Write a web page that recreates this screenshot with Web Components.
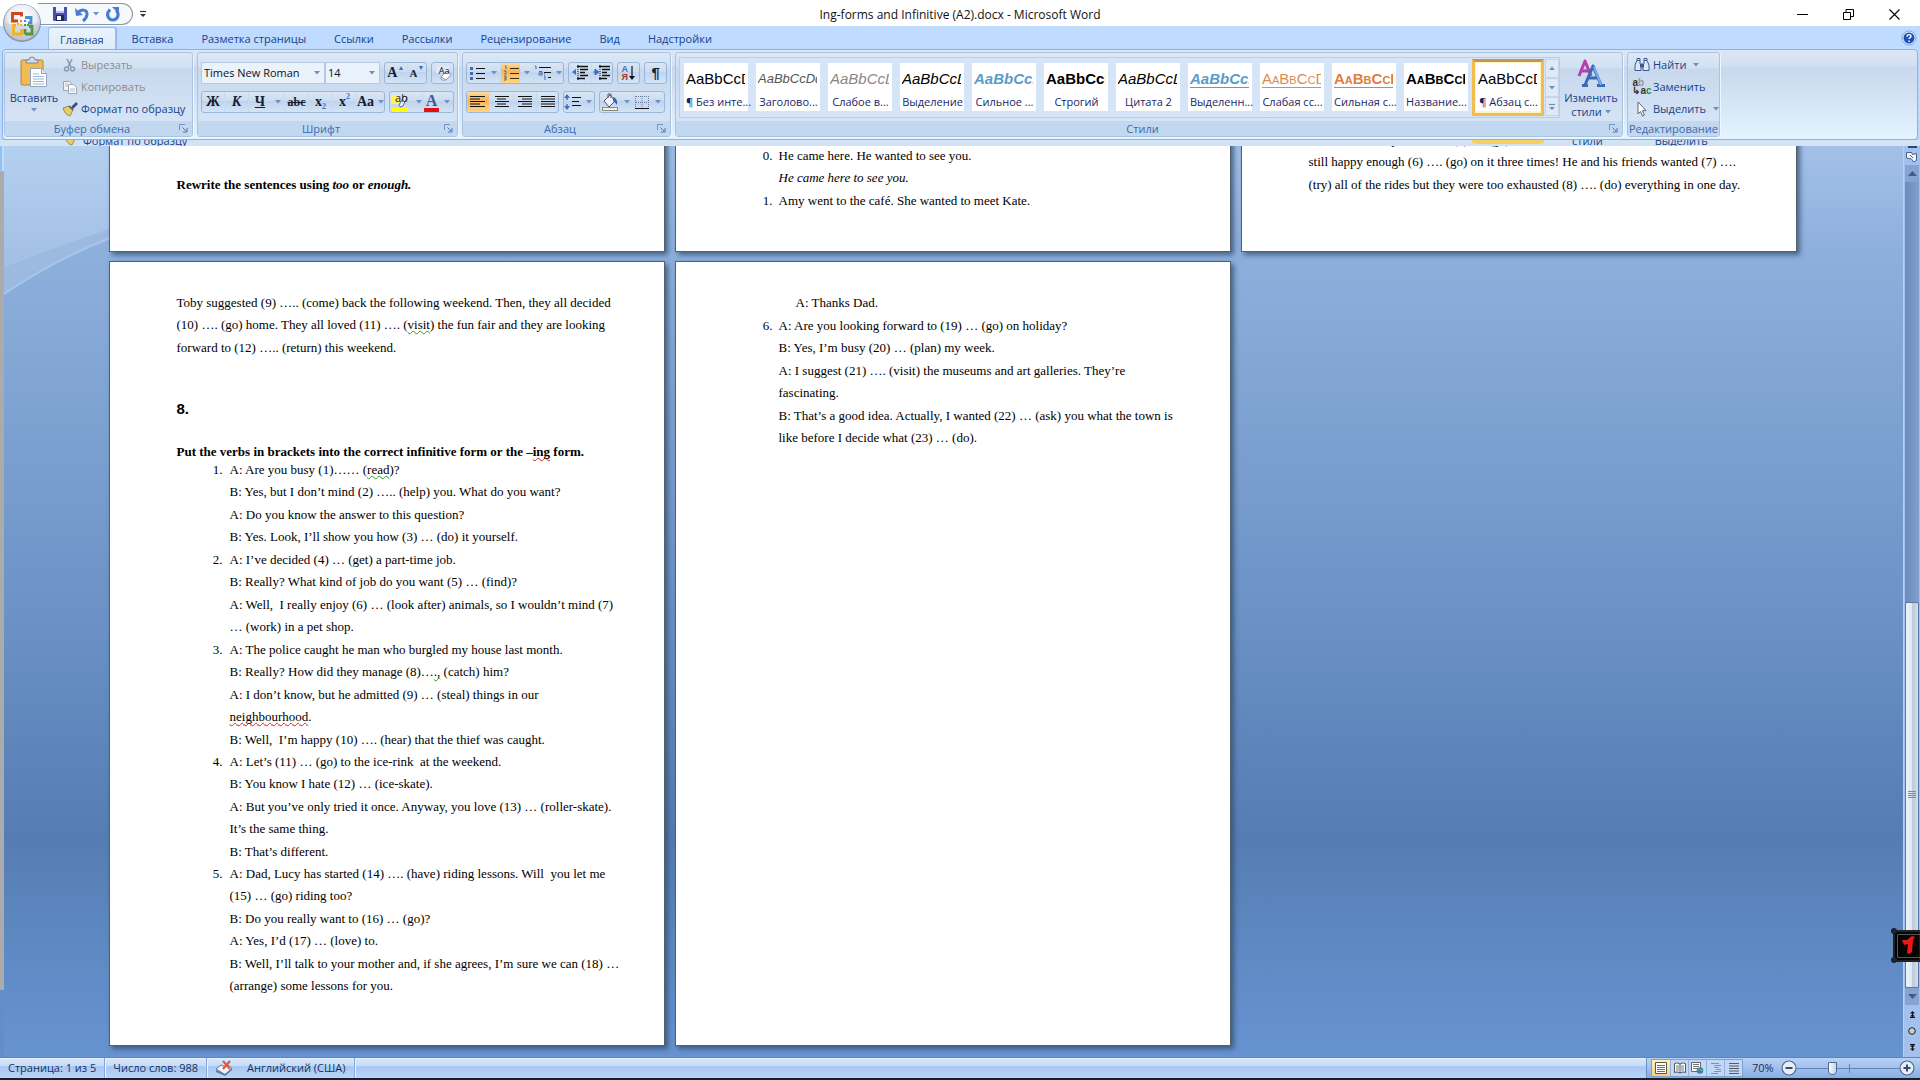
<!DOCTYPE html>
<html lang="ru">
<head>
<meta charset="utf-8">
<title>Ing-forms and Infinitive (A2).docx - Microsoft Word</title>
<style>
html,body{margin:0;height:100%;overflow:hidden;background:#fff}
body{font:11px/16px "Open Sans","Noto Sans",sans-serif;color:#15428b}
</style>
</head>
<body>
<word-app></word-app>
<script>
const define = (name, css, html, setup) => {
  customElements.define(name, class extends HTMLElement {
    constructor() {
      super();
      this.attachShadow({mode: 'open'});
    }
    connectedCallback() {
      if (this.shadowRoot.childNodes.length) return;
      const t = document.createElement('template');
      const body = typeof html === 'function' ? html(this) : html;
      t.innerHTML = `<style>*{box-sizing:border-box}button{font:inherit;color:inherit;border:0;padding:0;margin:0;background:none}${css}</style>${body}`;
      this.shadowRoot.append(t.content.cloneNode(true));
      if (setup) setup(this);
    }
  });
};

/* ---------- icons: [width, height, svg body] ---------- */
const bars = (y0, list, x = 0, c = '#111') => list.map(([a, b], i) => `<path stroke="${c}" d="M${x + a} ${y0 + i * 2.5}H${x + b}"/>`).join('');
const ICONS = {
  office: [42, 42, `<defs><radialGradient id="g" cx=".5" cy=".35" r=".65"><stop offset="0" stop-color="#fff"/><stop offset=".6" stop-color="#e9ecf1"/><stop offset="1" stop-color="#a9b3c2"/></radialGradient></defs>
    <circle cx="21" cy="21" r="19" fill="#8a94a6"/><circle cx="21" cy="20.500" r="18" fill="url(#g)"/><path d="M4 21a17 17 0 0 0 34 0q-17 4-34 0z" fill="#c4cad4" opacity=".6"/>
    <g fill="none" stroke-width="2.800"><path d="M17 19H11.500V11.500H20.500V14.500" stroke="#d0441c"/><path d="M24 15.500H30V21H27" stroke="#4a8fcf"/><path d="M15 23.500H12.500V32H20.500V27" stroke="#f0b323"/><path d="M24 32H31V24.500H28M24 27V32" stroke="#4f9a3c"/></g>
    <g fill="#e8762c"><rect x="19" y="18" width="2" height="2"/><rect x="23" y="18" width="2" height="2" fill="#4a8fcf"/><rect x="19" y="22" width="2" height="2" fill="#f0b323"/><rect x="23" y="22" width="2" height="2" fill="#4f9a3c"/><rect x="16" y="21" width="2" height="2" fill="#f0b323"/><rect x="26" y="22" width="2" height="2" fill="#4f9a3c"/></g>`],
  save: [16, 16, `<path d="M1 1h14v14H2l-1-1z" fill="#4a4fa8"/><path d="M4 1h8v6H4z" fill="#f4f6ff"/><path d="M4 9h8v6H4z" fill="#1f2566"/><path d="M5 10h4v4H5z" fill="#fff"/><path d="M4 5h8v2H4z" fill="#b9c4ee"/>`],
  undo: [16, 16, `<path d="M4 7C7 3 13 3 13 8q0 4-4 7" fill="none" stroke="#4a7bd0" stroke-width="3"/><path d="M1 2l1 8 7-1z" fill="#4a7bd0"/>`],
  redo: [16, 16, `<path d="M5 3.500C0 9 4 14 8 14s7-5 3.500-9.500" fill="none" stroke="#4a7bd0" stroke-width="3.200"/><path d="M7 1h7v7z" fill="#4a7bd0"/>`],
  more: [8, 8, `<path d="M1 1.500h6" stroke="#333" stroke-width="1.200"/><path d="M1 4h6L4 7z" fill="#333"/>`],
  gal: [8, 8, `<path d="M1 1.500h6" stroke="#6d8fc3" stroke-width="1.200"/><path d="M1 4h6L4 7z" fill="#6d8fc3"/>`],
  arrow: [6, 4, `<path d="M0 0h6L3 3.500z" fill="#6d8fc3"/>`],
  min: [11, 11, `<path d="M0 5.500h11" stroke="#000"/>`],
  max: [11, 11, `<path d="M.5 3.500h7v7h-7zM3 3.500V.5h7.500v7H8" fill="none" stroke="#000"/>`],
  close: [11, 11, `<path d="M.5.500l10 10M10.500.500l-10 10" stroke="#000" stroke-width="1.100"/>`],
  help: [16, 16, `<circle cx="8" cy="8" r="7" fill="#dcecff" stroke="#7fa4dc"/><circle cx="8" cy="8" r="5.500" fill="#1e51b8"/><path d="M6 6.800q0-2.200 2-2.200t2 1.600q0 1-1.300 1.700-.6.400-.6 1.100M8.100 10.500v1.400" fill="none" stroke="#fff" stroke-width="1.400"/>`],
  paste: [28, 32, `<rect x="1" y="4" width="22" height="25" rx="1" fill="#eebb57" stroke="#b98530"/><path d="M6 7V4h3q0-3 3-3t3 3h3v3z" fill="#d7dbe2" stroke="#7d8796"/><path d="M10.500 12.500h11l5 5v13h-16z" fill="#fff" stroke="#8fa3c4"/><path d="M21.500 12.500v5h5" fill="#dce7f7" stroke="#8fa3c4"/><path d="M13 18h6M13 20.500h11M13 23h11M13 25.500h11M13 28h11" stroke="#9db4d8"/>`],
  cut: [16, 16, `<path d="M5 2l4 8M10 2L6 10" stroke="#8b9bb3" stroke-width="1.600"/><circle cx="4.500" cy="12" r="2" fill="none" stroke="#8b9bb3" stroke-width="1.500"/><circle cx="10.500" cy="12" r="2" fill="none" stroke="#8b9bb3" stroke-width="1.500"/>`],
  copy: [16, 16, `<path d="M1.500 2.500h6l2 2v7h-8z" fill="#f1f3f7" stroke="#9aa5b6"/><path d="M6.500 5.500h5l3 3v6h-8z" fill="#fff" stroke="#9aa5b6"/><path d="M3 5h3M3 7h3M8 10h5M8 12h5" stroke="#b4bdcb"/>`],
  brush: [16, 16, `<path d="M9 6l5-5 2 2-5 5z" fill="#3b4c8a"/><path d="M1 7l6-2 4 4-3 6q-5-1-7-8z" fill="#e9cc68" stroke="#8e7a3a" stroke-width=".8"/><path d="M7 5l4 4" stroke="#555" stroke-width="1.500"/>`],
  launcher: [9, 9, `<path d="M.5 6V.5H6" fill="none" stroke="#6f95c7"/><path d="M3.500 3.500L7 7M8 4v4H4" fill="none" stroke="#4c75b0"/>`],
  clear: [18, 18, `<path d="M2 2h13v7H2z" fill="#e9eef8" opacity=".6"/><path d="M7 13l5-5q2-1 4 1 1 2 0 3l-4 4q-3 1-5-1z" fill="#fff" stroke="#8a97b4"/><path d="M7 13l5 3" stroke="#8a97b4"/>`],
  pen: [22, 20, `<rect x="2" y="16" width="16" height="4" fill="#ff0"/><rect x="1" y="3" width="9" height="9" fill="#fff35a"/><path d="M9 13l5-9 3 1-4 9-3 1z" fill="#e4ecf8" stroke="#5b6f96"/>`],
  bullets: [16, 16, `<g fill="#4468b0"><rect x="1" y="2" width="3" height="3"/><rect x="1" y="7" width="3" height="3"/><rect x="1" y="12" width="3" height="3"/></g><path d="M7 3.500h9M7 8.500h9M7 13.500h9" stroke="#111"/>`],
  numbers: [16, 16, `<path d="M2 1h1v3M1 6h2v1.500L1.500 9h2M1 11h2v4H1M1 13h2" fill="none" stroke="#56688c"/><path d="M7 3.500h9M7 8.500h9M7 13.500h9" stroke="#3a2b10"/>`],
  multi: [18, 16, `<path d="M1 1h1v3M5 6.500h3V10H5V8h3M10 11h1v4M10 9h1" fill="none" stroke="#4468b0"/><path d="M5 2.500h12M10 7.500h7M14 12.500h3" stroke="#111"/>`],
  outdent: [18, 16, `<path d="M6 1.500h11M9 4.500h8M9 7.500h5M9 10.500h8M6 13.500h8" stroke="#111" stroke-width="1.500"/><path d="M7 0v16" stroke="#111" stroke-dasharray="1 1"/><path d="M5 4v6L1 7z" fill="#3f6fc4"/>`],
  indent: [18, 16, `<path d="M6 1.500h11M9 4.500h8M9 7.500h5M9 10.500h8M6 13.500h8" stroke="#111" stroke-width="1.500"/><path d="M7 0v16" stroke="#111" stroke-dasharray="1 1"/><path d="M2 4v6l4-3zM0 7h3" fill="#3f6fc4" stroke="#3f6fc4"/>`],
  sort: [8, 16, `<path d="M4 1v12" stroke="#111" stroke-width="1.200"/><path d="M1 11h6l-3 4z" fill="#111"/>`],
  left: [16, 14, bars(1.5, [[0, 15], [0, 10], [0, 15], [0, 10], [0, 15]])],
  center: [16, 14, bars(1.5, [[1, 15], [3, 12], [1, 15], [3, 12], [1, 15]])],
  right: [16, 14, bars(1.5, [[1, 15], [5, 15], [1, 15], [5, 15], [1, 15]])],
  justify: [16, 14, bars(1.5, [[1, 15], [1, 15], [1, 15], [1, 15], [1, 15]])],
  spacing: [18, 16, `<path d="M3 1v5M3 10v5" stroke="#3f6fc4" stroke-width="1.500"/><path d="M0 4l3-4 3 4zM0 12l3 4 3-4z" fill="#3f6fc4"/><path d="M8 3.500h9M8 7.500h7M8 11.500h9" stroke="#111"/>`],
  bucket: [18, 18, `<path d="M3 8l6-6 5 6-6 6z" fill="#eef3fb" stroke="#556"/><path d="M7 5V1h3v4" fill="none" stroke="#556"/><path d="M12 4q5 1 4 8-2-3-4-4z" fill="#3a65ad"/><rect x="1.500" y="14.500" width="15" height="3" fill="#f7f3e4" stroke="#8a8a80"/>`],
  borders: [15, 15, `<path d="M.5 1v12M13.500 1v12M7 1v12M1 1.500h12M1 7.500h12" stroke="#6a7da5" stroke-dasharray="1 1"/><path d="M0 13.500h14" stroke="#111"/>`],
  bigA: [32, 32, `<g fill="none" stroke-linejoin="round"><path d="M4 18L10 3l6 15M6 13h8" stroke="#b43fae" stroke-width="3"/><path d="M10 27L18 8l8 19M13 20h10M7 27.500h6M22 27.500h8" stroke="#3a6ab4" stroke-width="3"/><path d="M19 9l7 18" stroke="#7eaaf0" stroke-width="2"/></g>`],
  find: [16, 14, `<g fill="#dce8fa" stroke="#38588f"><path d="M3 2.500h3v3l1 2v5H1V7zM10 2.500h3L15 7v5.500H9v-5l1-2z"/><path d="M6.500 6h3v3h-3z" fill="#38588f"/><path d="M3 .5h3v2H3zM10 .5h3v2h-3z"/></g>`],
  select: [12, 16, `<path d="M2 1l8 8.500-3.600.3L8.500 14l-2 1-2-4.500L2 13z" fill="#fff" stroke="#5a6578"/>`],
  proof: [18, 16, `<path d="M1 9l5-4 3 1.500 5-1 3 3-7 6z" fill="#eef3fc" stroke="#6378a6"/><path d="M1 10v2l9 4 7-6V8l-7 6z" fill="#6378a6"/><path d="M8 1l7 8M15 1L8 9" stroke="#e2553d" stroke-width="2"/>`],
  vprint: [12, 12, `<path d="M.5.5h11v11H.5z" fill="#fff" stroke="#5b5640"/><path d="M2 3.500h8M2 5.500h8M2 7.500h8M2 9.500h8" stroke="#776f50"/>`],
  vread: [12, 12, `<path d="M6 2Q3 0 .5 1.500v9Q3 9 6 11q3-2 5.500-.5v-9Q9 0 6 2zV11" fill="#fff" stroke="#4d5360"/><path d="M2 4h3M2 6h3M2 8h3M7 4h3M7 6h3M7 8h3" stroke="#777"/>`],
  vweb: [13, 12, `<path d="M.5.5h9v9h-9z" fill="#fff" stroke="#666"/><path d="M2 2.500h6M2 4.500h6M2 6.500h5" stroke="#777"/><circle cx="9" cy="8.500" r="3.300" fill="#3d7fa8"/><path d="M7 8q2-2 3 0t2 0" stroke="#6fc06a" fill="none"/>`],
  vout: [12, 12, `<path d="M1 1.500h8M4 3.500h7M4 5.500h5M6 7.500h5M4 9.500h7M1 11.500h7" stroke="#8a919e"/>`],
  vdraft: [12, 12, `<path d="M1 1.500h10M1 4h10M1 6.500h10M1 9h10M1 11.500h10" stroke="#555b66"/>`],
  minus: [16, 16, `<circle cx="8" cy="8" r="7" fill="#e4eefb" stroke="#54698f" stroke-width="1.200"/><path d="M4.500 8h7" stroke="#3c4a66" stroke-width="2"/>`],
  plus: [16, 16, `<circle cx="8" cy="8" r="7" fill="#e4eefb" stroke="#54698f" stroke-width="1.200"/><path d="M4.500 8h7M8 4.500v7" stroke="#3c4a66" stroke-width="2"/>`],
  ruler: [12, 12, `<path d="M.5 1.500h5l1 2 4-1v7l-3 1.500-2-3-5-1z" fill="#f2f6fc" stroke="#4e5f80"/><path d="M4 4l3 3" stroke="#4e5f80"/>`],
  up: [9, 5, `<path d="M0 5h9L4.500 0z" fill="#435a8c"/>`],
  down: [9, 5, `<path d="M0 0h9L4.500 5z" fill="#435a8c"/>`],
  prev: [7, 7, `<path d="M3.500 0L6 2.500H1zM3.500 3L6 5.500H1z" fill="#111"/><path d="M1 6.500h5M3.500 1v5" stroke="#111"/>`],
  next: [7, 7, `<path d="M3.500 7L6 4.500H1zM3.500 4L6 1.500H1z" fill="#111"/><path d="M1 .5h5M3.500 1v5" stroke="#111"/>`],
  dot: [8, 8, `<circle cx="4" cy="4" r="3.300" fill="#c9ccd1" stroke="#222"/>`],
  badge: [30, 37, `<path d="M4 4h26v30H4z" fill="#050505" stroke="#222" stroke-width="2"/><path d="M7.500 7.500H30M7.500 7.500v23H30" fill="none" stroke="#555"/><circle cx="4" cy="4" r="3" fill="#1c222b"/><circle cx="4" cy="33" r="3" fill="#1c222b"/><path d="M12 13l5 0 5-4 3 1-2 3-1 12-3 2-2-1 1-9-4 1z" fill="#f01616"/>`]
};
define('office-icon', ':host{display:inline-flex;flex:none}svg{display:block}', el => {
  const [w, h, body] = ICONS[el.getAttribute('name')];
  return `<svg width="${w}" height="${h}" viewBox="0 0 ${w} ${h}" aria-hidden="true">${body}</svg>`;
});

/* ---------- title bar ---------- */
define('quick-access', `
:host{display:flex;align-items:center;gap:6px}
.pill{display:flex;align-items:center;gap:3px;height:22px;padding:0 11px 0 14px;border:1px solid #8f959f;border-left:0;border-radius:0 11px 11px 0;background:#f5f8fd}
.pill button:nth-child(2n){margin-left:3px}
button{display:flex}`, `
<div class="pill"><button aria-label="Сохранить"><office-icon name="save"></office-icon></button>
<button aria-label="Отменить"><office-icon name="undo"></office-icon></button><button aria-label="Список отмены"><office-icon name="arrow"></office-icon></button>
<button aria-label="Повторить"><office-icon name="redo"></office-icon></button></div>
<button aria-label="Настройка панели"><office-icon name="more"></office-icon></button>`);

define('title-bar', `
:host{display:grid;grid-template-columns:1fr auto 1fr;height:26px;background:#fff;color:#111;align-items:center}
quick-access{padding-left:38px}
h1{margin:0;font:inherit;font-size:12px;line-height:26px;padding-top:2px}
.win{display:flex;justify-content:flex-end;gap:35px;padding-right:20px}
.win button{display:flex}
.orb{position:absolute;left:1px;top:2px;z-index:2;display:flex}`, `
<button class="orb" aria-label="Office"><office-icon name="office"></office-icon></button>
<quick-access></quick-access><h1><slot></slot></h1>
<div class="win"><button aria-label="Свернуть"><office-icon name="min"></office-icon></button><button aria-label="Развернуть"><office-icon name="max"></office-icon></button><button aria-label="Закрыть"><office-icon name="close"></office-icon></button></div>`);

define('ribbon-tabs', `
:host{display:flex;height:23px;background:#bfdbff;padding:0 3px 0 48px;align-items:stretch}
nav{display:flex;flex:1;gap:4px}
nav button{padding:0 12px;line-height:26px;color:#15428b}
nav button[aria-current]{padding:0 11px;background:linear-gradient(#eaf4ff,#dfeaf8);border:1px solid #9dbce4;border-bottom:0;border-radius:3px 3px 0 0;line-height:24px;margin-top:1px;box-shadow:1px 0 1px #8fb6ea}
.help{display:flex;align-items:center}`, `
<nav><button aria-current="page">Главная</button><button>Вставка</button><button>Разметка страницы</button><button>Ссылки</button><button>Рассылки</button><button>Рецензирование</button><button>Вид</button><button>Надстройки</button></nav>
<button class="help" aria-label="Справка"><office-icon name="help"></office-icon></button>`);

/* ---------- ribbon parts ---------- */
define('ribbon-group', `
:host{display:flex;flex-direction:column;height:85px;border:1px solid #a9c4e2;border-radius:3px;box-shadow:1px 1px 0 #eef6ff;background:linear-gradient(#dde8f5,#d2e0f1 18%,#c7d8ed 19%,#d9e8f8)}
.body{flex:1;display:flex}
footer{display:flex;align-items:center;height:15px;background:#c1d8f0;color:#3e6aaa;line-height:15px}
footer span{flex:1;text-align:center;white-space:nowrap}
footer button{display:flex;padding-right:4px}`, el => `
<div class="body"><slot></slot></div><footer><span>${el.getAttribute('label')}</span>${el.hasAttribute('plain') ? '' : '<button aria-label="Параметры"><office-icon name="launcher"></office-icon></button>'}</footer>`);

define('button-strip', `
:host{display:flex;height:22px;border:1px solid #9ab6d9;border-radius:3px;background:linear-gradient(#d9e6f5,#cbdcf0 45%,#bfd3ec 46%,#d3e4f7);overflow:hidden}`, '<slot></slot>');

define('tool-button', `
:host{display:flex;border-left:1px solid #c9daee}
:host(:first-child){border-left:0}
button{display:flex;align-items:center;justify-content:center;gap:4px;flex:1;color:#16202e}
:host([active]) button .face{background:linear-gradient(#fbdca0,#f9b45a 40%,#fdd67c)}
.face{display:flex;align-items:center;justify-content:center;align-self:stretch;flex:1;font:bold 14px/18px "Liberation Serif",serif}
office-icon[name=arrow]{padding-right:3px}`, el => `
<button aria-label="${el.getAttribute('label')}"><span class="face">${el.hasAttribute('icon') ? `<office-icon name="${el.getAttribute('icon')}"></office-icon>` : ''}<slot></slot></span>${el.hasAttribute('menu') ? '<office-icon name="arrow"></office-icon>' : ''}</button>`,
el => { el.style.width = el.getAttribute('w') + 'px'; });

define('command-row', `
:host{display:block;color:#15428b}:host([disabled]){color:#8d8d8d}
button{display:flex;align-items:center;gap:3px;height:22px;white-space:nowrap}
.ic{width:16px;display:flex;justify-content:center;font:bold 10px/8px "Liberation Sans",sans-serif;color:#333}
office-icon[name=arrow]{margin-left:4px}
.rep{display:block;text-align:left}.rep b{color:#2d8a2d}.rep i{font-style:normal;color:#999}`, el => `
<button ${el.hasAttribute('disabled') ? 'disabled style="color:inherit"' : ''}><span class="ic">${el.getAttribute('icon') === 'replace' ? '<span class="rep">a<i>b</i><br>↳a<b>c</b></span>' : `<office-icon name="${el.getAttribute('icon')}"></office-icon>`}</span><span><slot></slot></span>${el.hasAttribute('menu') ? '<office-icon name="arrow"></office-icon>' : ''}</button>`);

define('clipboard-tools', `
:host{display:flex;width:187px;padding:1px 0 0 5px;gap:4px}
.paste{display:flex;flex-direction:column;align-items:center;width:48px;padding-top:2px;gap:2px}`, `
<button class="paste"><office-icon name="paste"></office-icon><span>Вставить</span><office-icon name="arrow"></office-icon></button>
<div><command-row disabled icon="cut">Вырезать</command-row><command-row disabled icon="copy">Копировать</command-row><command-row icon="brush">Формат по образцу</command-row></div>`);

define('combo-box', `
:host{display:flex;height:22px;border:1px solid #b3c9e6;background:#eaf2fb;align-items:center}
select{appearance:none;border:0;background:none;flex:1;min-width:0;font:inherit;color:#111;padding:0 0 0 2px;height:20px}
office-icon{padding-right:4px}`, el => `<select aria-label="${el.getAttribute('label')}"><option>${el.getAttribute('value')}</option></select><office-icon name="arrow"></office-icon>`,
el => { el.style.width = el.getAttribute('w') + 'px'; });

define('font-tools', `
:host{display:flex;flex-direction:column;gap:7px;padding:9px 3px 0;width:259px}
.row{display:flex;gap:4px}
.combos{display:flex}
.u{text-decoration:underline}.s{text-decoration:line-through;font-size:12px}
.small{font-size:11px}.tri{font-size:7px;color:#3f6fc4;align-self:flex-start;line-height:10px}
.dig{font-size:8px;color:#3f6fc4}.dig.lo{align-self:flex-end;line-height:10px}.dig.hi{align-self:flex-start;line-height:10px}
.stack{display:grid}.stack>*{grid-area:1/1}
.hl{font:11px/12px "Open Sans",sans-serif;padding-left:1px}
.aa{font:9px/10px "Open Sans",sans-serif;padding:2px 0 0 3px}
.col{color:#3a5a9c;border-bottom:4px solid #e3100f;line-height:15px;padding:0 2px;font-size:16px}`, `
<div class="row"><div class="combos"><combo-box w="124" label="Шрифт" value="Times New Roman"></combo-box><combo-box w="55" label="Размер шрифта" value="14"></combo-box></div>
<button-strip><tool-button w="22" label="Увеличить размер"><span>A</span><span class="tri">▲</span></tool-button><tool-button w="20" label="Уменьшить размер"><span class="small">A</span><span class="tri">▼</span></tool-button></button-strip>
<button-strip><tool-button w="21" label="Очистить формат"><span class="stack"><office-icon name="clear"></office-icon><span class="aa">Aa</span></span></tool-button></button-strip></div>
<div class="row"><button-strip><tool-button w="22" label="Полужирный">Ж</tool-button><tool-button w="24" label="Курсив"><i>К</i></tool-button><tool-button w="36" menu label="Подчеркнутый"><span class="u">Ч</span></tool-button><tool-button w="24" label="Зачеркнутый"><span class="s">abc</span></tool-button><tool-button w="24" label="Подстрочный"><span>x</span><span class="dig lo">2</span></tool-button><tool-button w="24" label="Надстрочный"><span>x</span><span class="dig hi">2</span></tool-button><tool-button w="28" menu label="Регистр">Aa</tool-button></button-strip>
<button-strip><tool-button w="32" menu label="Выделение цветом"><span class="stack"><office-icon name="pen"></office-icon><span class="hl">ab</span></span></tool-button><tool-button w="31" menu label="Цвет текста"><span class="col">A</span></tool-button></button-strip></div>`);

define('paragraph-tools', `
:host{display:flex;flex-direction:column;gap:7px;padding:9px 3px 0;width:207px}
.row{display:flex;gap:4px}
.az{display:grid;font:bold 9px/8px "Liberation Sans",sans-serif;color:#3f6fc4}.az b{color:#a8322c}
.p{font:bold 15px/18px "Liberation Sans",sans-serif}`, `
<div class="row"><button-strip><tool-button w="33" menu icon="bullets" label="Маркеры"></tool-button><tool-button w="34" menu active icon="numbers" label="Нумерация"></tool-button><tool-button w="30" menu icon="multi" label="Многоуровневый список"></tool-button></button-strip>
<button-strip><tool-button w="22" icon="outdent" label="Уменьшить отступ"></tool-button><tool-button w="21" icon="indent" label="Увеличить отступ"></tool-button></button-strip>
<button-strip><tool-button w="21" label="Сортировка"><span class="az"><span>А</span><b>Я</b></span><office-icon name="sort"></office-icon></tool-button></button-strip>
<button-strip><tool-button w="21" label="Отобразить все знаки"><span class="p">¶</span></tool-button></button-strip></div>
<div class="row"><button-strip><tool-button w="22" active icon="left" label="По левому краю"></tool-button><tool-button w="24" icon="center" label="По центру"></tool-button><tool-button w="23" icon="right" label="По правому краю"></tool-button><tool-button w="22" icon="justify" label="По ширине"></tool-button></button-strip>
<button-strip><tool-button w="30" menu icon="spacing" label="Интервал"></tool-button></button-strip>
<button-strip><tool-button w="33" menu icon="bucket" label="Заливка"></tool-button><tool-button w="31" menu icon="borders" label="Границы"></tool-button></button-strip></div>`);

define('style-tile', `
:host{display:flex;width:72px;padding:4px;color:#1a1f66}
:host([selected]){padding:1px;border:3px solid #f0bd4e;border-top-color:#c8964e;background:#fff3c8}
button{display:flex;flex-direction:column;width:64px;height:48px;background:#fff;padding:4px 1px 0 2px}
.sample{height:24px;width:59px;overflow:hidden;white-space:nowrap;font:15px/24px "Liberation Sans",sans-serif;color:var(--c,#000);text-align:left}
.name{align-self:stretch;text-align:center;white-space:nowrap;line-height:22px;height:20px}
.i{font-style:italic}.b{font-weight:bold}.u{height:21px;margin-bottom:3px;border-bottom:1px solid}.sc{font-variant:small-caps}.sm{font-size:13px}`, el => `
<button><span class="sample ${el.getAttribute('look') || ''}" style="--c:${el.getAttribute('color') || '#000'}">AaBbCcDd</span><span class="name"><slot></slot></span></button>`);

define('style-gallery', `
:host{display:flex;padding:4px 4px 0 3px;gap:4px}
.frame{display:flex;height:61px;border:1px solid #b8cde8;background:#d5e5f7;padding:1px 0}
.scroll{display:flex;flex-direction:column;width:14px;margin-left:1px}
.scroll button{flex:1;display:flex;align-items:center;justify-content:center;border:1px solid #c3d5ec;background:#e0eaf6}
.scroll .up{transform:scaleY(-1)}
.change{display:flex;flex-direction:column;align-items:center;width:54px;line-height:13px;padding-top:1px;gap:1px}
.change span{display:flex;align-items:center;gap:3px}`, `
<div class="frame"><style-tile>¶ Без инте...</style-tile><style-tile look="i sm" color="#555">Заголово...</style-tile><style-tile look="i" color="#888">Слабое в...</style-tile><style-tile look="i">Выделение</style-tile><style-tile look="i b" color="#5b9bc8">Сильное ...</style-tile><style-tile look="b">Строгий</style-tile><style-tile look="i">Цитата 2</style-tile><style-tile look="i b u" color="#5b9bc8">Выделенн...</style-tile><style-tile look="sc u" color="#d98c52">Слабая сс...</style-tile><style-tile look="sc b u" color="#dc8040">Сильная с...</style-tile><style-tile look="sc b">Название...</style-tile><style-tile selected>¶ Абзац с...</style-tile>
<div class="scroll"><button class="up" aria-label="Вверх"><office-icon name="arrow"></office-icon></button><button aria-label="Вниз"><office-icon name="arrow"></office-icon></button><button aria-label="Все стили"><office-icon name="gal"></office-icon></button></div></div>
<button class="change"><office-icon name="bigA"></office-icon><span>Изменить</span><span>стили <office-icon name="arrow"></office-icon></span></button>`);

define('ribbon-panel', `
:host{display:flex;gap:4px;height:91px;margin:0 2px;padding:2px 1px;border:1px solid #8db2e3;border-radius:4px;background:linear-gradient(#dce7f5,#d2e0f1 18%,#c8d8ed 19%,#e3f3ff);box-shadow:0 1px 1px #8bb0d8}
.edit{padding:1px 0 0 6px;width:91px}`, `
<ribbon-group label="Буфер обмена"><clipboard-tools></clipboard-tools></ribbon-group>
<ribbon-group label="Шрифт"><font-tools></font-tools></ribbon-group>
<ribbon-group label="Абзац"><paragraph-tools></paragraph-tools></ribbon-group>
<ribbon-group label="Стили"><style-gallery></style-gallery></ribbon-group>
<ribbon-group label="Редактирование" plain><div class="edit"><command-row icon="find" menu>Найти</command-row><command-row icon="replace">Заменить</command-row><command-row icon="select" menu>Выделить</command-row></div></ribbon-group>`);

/* thin band under the ribbon where the lower edge of the commands repeats */
define('ribbon-echo', `
:host{display:flex;justify-content:flex-start;height:6px;overflow:hidden;background:#d3e3f6;padding-left:64px;color:#15428b}
div{display:flex;align-items:flex-end;height:6px}
.s{flex:none;width:1408px}
.y{flex:none;width:72px;height:4px;background:#f5cf6a;border-radius:0 0 3px 3px;align-self:flex-start}
.t{padding-left:28px}.v{padding-left:52px}
span{line-height:10px}
office-icon+span{padding-left:3px}`, `
<div class="s" aria-hidden="true"><office-icon name="brush"></office-icon><span>Формат по образцу</span></div><div class="y"></div><div class="t" aria-hidden="true"><span>стили</span></div><div class="v" aria-hidden="true"><span>Выделить</span></div>`);

/* ---------- document ---------- */
define('spell-mark', `:host{text-decoration:underline wavy #d02020 1px;text-underline-offset:1px;text-decoration-skip-ink:none}:host([grammar]){text-decoration-color:#2b9a2b}`, '<slot></slot>');

define('doc-page', `
:host{display:block;width:556px;height:785px;box-sizing:border-box;background:#fff;border:1px solid #51606f;box-shadow:3px 3px 5px #33506fcc;padding:30px 0 0 67px}
:host([tail]){display:flex;flex-direction:column;justify-content:flex-end;padding:0 0 var(--foot,55px) 67px}`, '<slot></slot>');

define('word-document', `
:host{display:grid;grid-template-columns:repeat(3,556px);gap:9px 10px;justify-content:center;align-content:end;padding:0 2px 11px 0;overflow:hidden;color:#000;font:13px/22px "Liberation Serif",serif}
p,h2,ol{margin:0;padding:0;white-space:nowrap}
p:nth-child(even){padding-bottom:1px}
h2{font:bold 15px/16px "Liberation Sans",sans-serif;padding:42px 0 27px}
h3{font:bold 13px/15px "Liberation Serif",serif;margin:0}
ol{list-style:none}
li{display:flex}
li>span{width:53px;padding-right:7px;text-align:right}
.in li>span{width:36px;padding-right:6px}
.cut span{display:inline-block}
.first{padding-bottom:1px}`, `
<doc-page tail style="--foot:59px"><h3>Rewrite the sentences using <i>too</i> or <i>enough.</i></h3></doc-page>
<doc-page tail style="--foot:39px"><ol class="in"><li><span>0.</span><div><p>He came here. He wanted to see you.</p><p><i>He came here to see you.</i></p></div></li><li><span>1.</span><div><p>Amy went to the café. She wanted to meet Kate.</p></div></li></ol></doc-page>
<doc-page tail><p class="cut"><span style="padding-left:83px">y</span><span style="padding-left:55px">(5)</span><span style="padding-left:20px">(go)</span></p><p>still happy enough (6) …. (go) on it three times! He and his friends wanted (7) ….</p><p>(try) all of the rides but they were too exhausted (8) …. (do) everything in one day.</p></doc-page>
<doc-page><p>Toby suggested (9) ….. (come) back the following weekend. Then, they all decided</p><p>(10) …. (go) home. They all loved (11) …. (<spell-mark grammar>visit</spell-mark>) the fun fair and they are looking</p><p>forward to (12) ….. (return) this weekend.</p>
<h2>8.</h2><h3>Put the verbs in brackets into the correct infinitive form or the –<spell-mark>ing</spell-mark> form.</h3>
<ol><li><span>1.</span><div><p>A: Are you busy (1)…… (<spell-mark grammar>read</spell-mark>)?</p><p>B: Yes, but I don’t mind (2) ….. (help) you. What do you want?</p><p>A: Do you know the answer to this question?</p><p>B: Yes. Look, I’ll show you how (3) … (do) it yourself.</p></div></li>
<li><span>2.</span><div><p>A: I’ve decided (4) … (get) a part-time job.</p><p>B: Really? What kind of job do you want (5) … (find)?</p><p>A: Well,&nbsp; I really enjoy (6) … (look after) animals, so I wouldn’t mind (7)</p><p>… (work) in a pet shop.</p></div></li>
<li><span>3.</span><div><p>A: The police caught he man who burgled my house last month.</p><p>B: Really? How did they manage (8)…<spell-mark grammar>.,</spell-mark> (catch) him?</p><p>A: I don’t know, but he admitted (9) … (steal) things in our</p><p><spell-mark>neighbourhood</spell-mark>.</p><p>B: Well,&nbsp; I’m happy (10) …. (hear) that the thief was caught.</p></div></li>
<li><span>4.</span><div><p>A: Let’s (11) … (go) to the ice-rink&nbsp; at the weekend.</p><p>B: You know I hate (12) … (ice-skate).</p><p>A: But you’ve only tried it once. Anyway, you love (13) … (roller-skate).</p><p>It’s the same thing.</p><p>B: That’s different.</p></div></li>
<li><span>5.</span><div><p>A: Dad, Lucy has started (14) …. (have) riding lessons. Will&nbsp; you let me</p><p>(15) … (go) riding too?</p><p>B: Do you really want to (16) … (go)?</p><p>A: Yes, I’d (17) … (love) to.</p><p>B: Well, I’ll talk to your mother and, if she agrees, I’m sure we can (18) …</p><p>(arrange) some lessons for you.</p></div></li></ol></doc-page>
<doc-page><p class="first" style="padding-left:53px">A: Thanks Dad.</p><ol class="in"><li><span>6.</span><div><p>A: Are you looking forward to (19) … (go) on holiday?</p><p>B: Yes, I’m busy (20) … (plan) my week.</p><p>A: I suggest (21) …. (visit) the museums and art galleries. They’re</p><p>fascinating.</p><p>B: That’s a good idea. Actually, I wanted (22) … (ask) you what the town is</p><p>like before I decide what (23) … (do).</p></div></li></ol></doc-page>`);

define('scroll-column', `
:host{display:flex;flex-direction:column;align-items:center;width:17px;background:#a3c1ee;border-left:1px solid #b9d0f3}
.split{width:9px;height:2px;background:#2f4672;margin-bottom:3px}
.ruler{padding-bottom:2px;display:flex}
.track{flex:1;align-self:stretch;display:flex;flex-direction:column;align-items:center;margin:0 1px;background:linear-gradient(90deg,#6b8bbd,#7f9fcd)}
.step{display:flex;align-items:center;justify-content:center;width:14px;height:17px;background:#86a4d0}
.thumb{width:14px;height:386px;border:1px solid #5b76a8;border-radius:2px;background:linear-gradient(90deg,#f1f5fb,#dce5f1 50%,#b9c8dc 55%,#d5dfec);display:flex;align-items:center;justify-content:center}
.grip{width:8px;height:8px;background:repeating-linear-gradient(#7d8ba3 0 1px,transparent 1px 2px)}
.space{flex:1}
.nav{display:flex;flex-direction:column;align-items:center;gap:9px;padding:6px 0 6px}
.nav button{display:flex}`, `
<div class="split"></div><button class="ruler" aria-label="Линейка"><office-icon name="ruler"></office-icon></button>
<div class="track"><button class="step" aria-label="Вверх"><office-icon name="up"></office-icon></button><div class="space"></div><div class="thumb"><div class="grip"></div></div><button class="step" aria-label="Вниз"><office-icon name="down"></office-icon></button></div>
<div class="nav"><button aria-label="Предыдущая страница"><office-icon name="prev"></office-icon></button><button aria-label="Выбор объекта"><office-icon name="dot"></office-icon></button><button aria-label="Следующая страница"><office-icon name="next"></office-icon></button></div>`);

define('work-area', `
:host{display:grid;grid-template-columns:4px minmax(0,1fr) 17px;min-height:0;position:relative}
.edge{display:flex;flex-direction:column;background:#638dc8}
.edge i{height:26px;background:#c3dbf8;border-left:2px solid #8fc4f0;border-bottom:1px solid #8db2e3}
.edge b{height:818px;background:#ababab}
.stage{display:grid;min-height:0;min-width:0;background:linear-gradient(#a3c0e8,#8dafdc 12%,#7fa3d2 28%,#6b91c6 52%,#557db3 76%,#5f89c2 88%,#6793d1)}
.stage>*{grid-area:1/1;min-height:0}
.swoosh{width:340px;height:160px}
.badge{position:absolute;right:0;bottom:93px;display:flex}`, `
<div class="edge"><i></i><b></b></div>
<div class="stage"><svg class="swoosh" viewBox="0 0 340 160" aria-hidden="true"><defs><linearGradient id="s" x2="0" y2="1"><stop offset="0" stop-color="#b4d0f0"/><stop offset="1" stop-color="#a2bfe4"/></linearGradient></defs><path d="M0 0H340V20Q200 50 106 83Q50 102 0 122z" fill="url(#s)"/><path d="M0 122Q50 102 106 83L200 55V60L106 92Q50 114 0 148z" fill="#9cb9e0"/><path d="M0 148Q50 114 106 92" fill="none" stroke="#a9c5ea" stroke-width="2"/></svg><word-document></word-document></div>
<scroll-column></scroll-column>
<div class="badge"><office-icon name="badge"></office-icon></div>`);

/* ---------- status bar ---------- */
define('zoom-slider', `
:host{display:flex;align-items:center}
output{width:29px}
button{display:flex}
.rail{position:relative;display:flex;align-items:center;width:102px;height:18px;background:linear-gradient(#5f82b8,#5f82b8) center/100% 1px no-repeat,linear-gradient(#5f82b8,#5f82b8) 52px center/1px 9px no-repeat}
input{appearance:none;width:100%;margin:0;background:none;height:16px}
input::-webkit-slider-thumb{appearance:none;width:9px;height:13px;border:1px solid #54698f;border-radius:1px 1px 5px 5px;background:linear-gradient(90deg,#f6faff,#c3d5ee)}`, `
<output>70%</output><button aria-label="Уменьшить"><office-icon name="minus"></office-icon></button>
<label class="rail"><input type="range" aria-label="Масштаб" min="0" max="100" value="33"></label>
<button aria-label="Увеличить"><office-icon name="plus"></office-icon></button>`);

define('status-bar', `
:host{display:flex;height:21px;border-top:1px solid #5d84bd;box-shadow:inset 0 1px 0 #e6f1ff;background:linear-gradient(#d8e7fb,#c6dbf8 40%,#a8c6f0 41%,#b9d5f8);color:#15305f;line-height:20px;white-space:nowrap}
.c{padding:0 8px;border-right:1px solid #86a9da;box-shadow:1px 0 0 #e6f1ff;display:flex;align-items:center;gap:14px}
.fill{flex:1}
.right{display:flex;align-items:center;gap:8px;padding:0 5px 0 4px;background:linear-gradient(#b9d2f5,#86aee6);border-left:1px solid #6a90c8}
.views{display:flex;height:18px;border:1px solid #7f9fcf;background:#c2d8f6}
.views button{display:flex;align-items:center;justify-content:center;width:18px;border-left:1px solid #93b2df}
.views .on{background:linear-gradient(#fff0c2,#f8cf7a);border-left:0}
zoom-slider{padding-left:1px}`, `
<div class="c">Страница: 1 из 5</div><div class="c">Число слов: 988</div><div class="c"><office-icon name="proof"></office-icon><span>Английский (США)</span></div>
<div class="fill"></div><div class="right"><div class="views"><button class="on" aria-label="Разметка страницы"><office-icon name="vprint"></office-icon></button><button aria-label="Режим чтения"><office-icon name="vread"></office-icon></button><button aria-label="Веб-документ"><office-icon name="vweb"></office-icon></button><button aria-label="Структура"><office-icon name="vout"></office-icon></button><button aria-label="Черновик"><office-icon name="vdraft"></office-icon></button></div><zoom-slider></zoom-slider></div>`);

define('word-app', `
:host{display:grid;grid-template-rows:auto auto auto auto minmax(0,1fr) auto 2px;height:100vh;background:#bfdbff;position:relative}
.task{background:#15202b}`, `
<title-bar>Ing-forms and Infinitive (A2).docx - Microsoft Word</title-bar>
<ribbon-tabs></ribbon-tabs><ribbon-panel></ribbon-panel><ribbon-echo></ribbon-echo>
<work-area></work-area><status-bar></status-bar><div class="task"></div>`);
</script>
</body>
</html>
